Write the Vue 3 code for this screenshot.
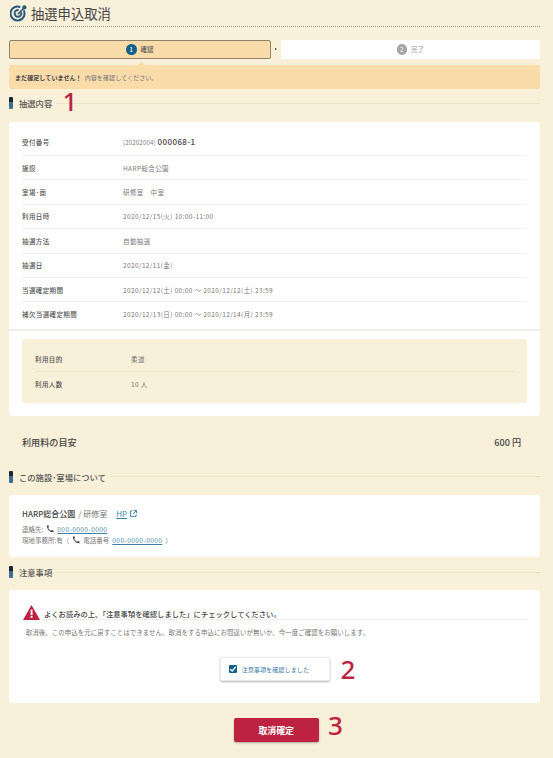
<script setup>
const rows = [
  { label: '施設', value: 'HARP総合公園' },
  { label: '室場･面', value: '研修室　中室' },
  { label: '利用日時', value: '2020/12/15(火) 10:00-11:00' },
  { label: '抽選方法', value: '自動抽選' },
  { label: '抽選日', value: '2020/12/11(金)' },
  { label: '当選確定期間', value: '2020/12/12(土) 00:00 ～ 2020/12/12(土) 23:59' },
  { label: '補欠当選確定期間', value: '2020/12/13(日) 00:00 ～ 2020/12/14(月) 23:59' },
]
</script>

<template>
  <div class="page">
    <header class="title">
      <svg class="target" width="17" height="17" viewBox="0 0 17 17" fill="none" stroke="#28577c" aria-hidden="true">
        <path d="M13.8 5.4A7 7 0 1 1 10.4 2.1" stroke-width="2" />
        <path d="M11.2 7.2A3.4 3.4 0 1 1 8.6 5" stroke-width="1.9" />
        <path d="M7.8 9.2L14 3" stroke-width="1.6" />
        <circle cx="14.4" cy="2.4" r="2.1" fill="#28577c" stroke="none" />
      </svg>
      <h1>抽選申込取消</h1>
    </header>

    <div class="steps">
      <div class="step active"><span class="num">1</span>確認</div>
      <span class="arrow"></span>
      <div class="step"><span class="num">2</span>完了</div>
    </div>

    <div class="alert"><b>まだ確定していません！</b>内容を確認してください。</div>

    <div class="section first">
      <span class="bar"></span><h2>抽選内容</h2><span class="rule"></span>
      <span class="mark mark1">1</span>
    </div>

    <section class="card detail">
      <dl class="table main">
        <div class="row">
          <dt>受付番号</dt>
          <dd class="receipt"><small>[20202004]</small> <strong>000068-1</strong></dd>
        </div>
        <div v-for="r in rows" :key="r.label" class="row">
          <dt>{{ r.label }}</dt>
          <dd>{{ r.value }}</dd>
        </div>
      </dl>
      <div class="sub-wrap">
        <dl class="table sub">
          <div class="row"><dt>利用目的</dt><dd>柔道</dd></div>
          <div class="row"><dt>利用人数</dt><dd>10 人</dd></div>
        </dl>
      </div>
    </section>

    <div class="fee"><span>利用料の目安</span><span>600 円</span></div>

    <div class="section">
      <span class="bar"></span><h2>この施設･室場について</h2><span class="rule"></span>
    </div>

    <section class="card facility">
      <p class="fname">
        <b>HARP総合公園</b><span class="room">/ 研修室</span>
        <a class="hp">HP</a>
        <svg width="7" height="7" viewBox="0 0 8 8" fill="none" stroke="#3f7fa6" stroke-width="1.1" aria-hidden="true">
          <path d="M3 1H.7v6.3H7V5M4.4.6h3v3M7.2.8L3.4 4.6" />
        </svg>
      </p>
      <p class="contact">連絡先:<svg class="tel" width="8" height="8" viewBox="0 0 8 8" aria-hidden="true"><path d="M1 .5L2.4 .2 3 2 2.2 2.8C2.7 4 3.8 5.2 5 5.8L5.9 5 7.7 5.7 7.4 7.2C4 7.6.5 4 1 .5Z" fill="#444"/></svg><a>000-0000-0000</a></p>
      <p class="contact">現地事務所:有（<svg class="tel" width="8" height="8" viewBox="0 0 8 8" aria-hidden="true"><path d="M1 .5L2.4 .2 3 2 2.2 2.8C2.7 4 3.8 5.2 5 5.8L5.9 5 7.7 5.7 7.4 7.2C4 7.6.5 4 1 .5Z" fill="#444"/></svg><span>電話番号</span><a>000-0000-0000</a><span>）</span></p>
    </section>

    <div class="section">
      <span class="bar"></span><h2>注意事項</h2><span class="rule"></span>
    </div>

    <section class="card notice">
      <div class="warn">
        <svg width="17" height="15" viewBox="0 0 17 15" aria-hidden="true">
          <path d="M8.5 0L17 15H0Z" fill="#bd2340" />
          <rect x="7.6" y="4.6" width="1.9" height="5.6" fill="#fff" />
          <rect x="7.6" y="11" width="1.9" height="1.9" fill="#fff" />
        </svg>
        <p>よくお読みの上､「注意事項を確認しました」にチェックしてください。</p>
      </div>
      <p class="desc">取消後、この申込を元に戻すことはできません。取消をする申込にお間違いが無いか、今一度ご確認をお願いします。</p>
      <div class="check-line">
        <label class="check">
          <span class="box">
            <svg width="8" height="8" viewBox="0 0 8 8" fill="none" stroke="#fff" stroke-width="1.3" aria-hidden="true"><path d="M1.2 4.2L3.2 6 6.8 1.8" /></svg>
          </span>
          注意事項を確認しました
          <span class="mark mark2">2</span>
        </label>
      </div>
    </section>

    <div class="actions">
      <button class="confirm" type="button">
        取消確定
        <span class="mark mark3">3</span>
      </button>
    </div>
  </div>
</template>

<style>
html, body { margin: 0; background: #f8f0d9; }
</style>

<style scoped>
* { box-sizing: border-box; }
.page {
  width: 553px;
  height: 758px;
  overflow: hidden;
  padding: 0 13px 0 9px;
  background: #f8f0d9;
  color: #555;
  font-family: "Noto Sans CJK JP", "Noto Sans", sans-serif;
  font-size: 6.5px;
}
p, h1, h2, dl, dd { margin: 0; }

.title {
  display: flex;
  align-items: center;
  gap: 4px;
  height: 27px;
  padding: 1px 0 0 1px;
  border-bottom: 1px dotted #999;
}
.title h1 {
  font-size: 13.3px;
  font-weight: 400;
  color: #444;
  line-height: 1;
}
.steps {
  display: flex;
  align-items: center;
  margin-top: 13px;
}
.step {
  flex: 1;
  height: 18.5px;
  display: flex;
  align-items: center;
  justify-content: center;
  gap: 4px;
  background: #fff;
  border-radius: 2px;
  color: #999;
  font-size: 6.5px;
}
.step.active {
  background: #fadcaa;
  border: 1px solid #8d8468;
  color: #555;
  font-weight: 500;
}
.num {
  width: 10.5px;
  height: 10.5px;
  border-radius: 50%;
  background: #a5a5a5;
  color: #fff;
  display: flex;
  align-items: center;
  justify-content: center;
  font-size: 6px;
}
.active .num { background: #145f8c; }
.arrow {
  width: 10px;
  display: flex;
  justify-content: center;
}
.arrow::before {
  content: "";
  border-left: 2px solid #333;
  border-top: 1.5px solid transparent;
  border-bottom: 1.5px solid transparent;
}
.alert {
  position: relative;
  margin-top: 6.5px;
  height: 24px;
  padding: 0 6px;
  display: flex;
  align-items: center;
  gap: 3px;
  background: #fadcaa;
  border-radius: 2px;
  color: #777;
  font-size: 6.1px;
  white-space: pre;
}
.alert b { color: #444; font-weight: 700; }
.alert::before {
  content: "";
  position: absolute;
  top: -3px;
  left: 128px;
  border-left: 4px solid transparent;
  border-right: 4px solid transparent;
  border-bottom: 3px solid #fadcaa;
}

.section {
  position: relative;
  display: flex;
  align-items: center;
  height: 13px;
  margin-top: 8.5px;
}
.section.first { margin-top: 7.5px; }
.bar {
  width: 4px;
  height: 12px;
  background: linear-gradient(#1a2530 0 40%, #3e6d92 40%);
  border-radius: 1px;
}
.section h2 {
  margin-left: 6px;
  font-size: 8.3px;
  font-weight: 500;
  color: #555;
  white-space: nowrap;
}
.rule {
  flex: 1;
  height: 1px;
  margin-left: 4px;
  background: #ece3c8;
}
.mark {
  position: absolute;
  font-family: "Noto Sans", sans-serif;
  font-size: 26px;
  line-height: 1;
  font-weight: 500;
  color: #bd2340;
}
.mark1 { left: 53.5px; top: -9px; }
.mark2 { left: 120px; top: -2.5px; }
.mark3 { left: 94px; top: -6.5px; }

.card {
  background: #fff;
  border-radius: 3px;
}
.detail {
  margin-top: 12.5px;
  height: 294px;
}
.table .row {
  display: flex;
  align-items: center;
  border-top: 1px solid #f0f0ee;
  letter-spacing: .38px;
}
.table .row:first-child { border-top: 0; }
.table dt {
  font-weight: 500;
  color: #555;
}
.table dd { color: #777; }
.main {
  padding: 9px 13px 0;
  height: 209px;
  border-bottom: 2px solid #eeeeea;
}
.main .row { height: 24.4px; }
.main .row:first-child { height: 24px; padding-bottom: 3px; }
.main dt { width: 101px; }
.receipt strong {
  font-size: 8px;
  font-weight: 500;
  color: #444;
  letter-spacing: .4px;
}
.receipt small {
  font-size: 6px;
  letter-spacing: .2px;
}
.sub-wrap { padding: 8px 13px 0; }
.sub {
  height: 64px;
  padding: 8px 13px;
  background: #f8f0d9;
  border-radius: 3px;
}
.sub .row { height: 24px; border-top-color: #efe6cc; }
.sub dt { width: 96px; }
.fee {
  display: flex;
  justify-content: space-between;
  padding: 0 19px 0 13px;
  margin: 18px 0 20px;
  height: 16px;
  align-items: center;
  font-size: 9.1px;
  font-weight: 500;
  color: #444;
}

.facility {
  margin-top: 12px;
  height: 62px;
  padding: 11px 13px 0;
}
.fname {
  display: flex;
  align-items: center;
  height: 14px;
  font-size: 8px;
  color: #777;
  white-space: pre;
  margin-bottom: 3px;
}
.fname b { font-weight: 500; color: #444; }
.room { margin-left: 3px; }
.hp {
  margin: 0 3px 0 9px;
  color: #3f7fa6;
  text-decoration: underline;
}
.contact {
  display: flex;
  align-items: center;
  height: 11px;
  gap: 3px;
  color: #777;
  white-space: pre;
}
.contact a, .hp { text-underline-offset: 1px; }
.contact a {
  color: #3f7fa6;
  text-decoration: underline;
  letter-spacing: .45px;
}
.notice {
  margin-top: 11.5px;
  height: 113px;
  padding: 15px 13px 0;
}
.warn {
  display: flex;
  align-items: center;
  gap: 4px;
  margin-left: 1px;
}
.warn p {
  flex: 1;
  height: 15px;
  padding-top: 3px;
  line-height: 12px;
  font-size: 7.3px;
  font-weight: 500;
  color: #444;
  white-space: nowrap;
  border-bottom: 1px dotted #ddd;
}
.desc {
  margin: 7px 0 0 3.7px;
  height: 10px;
  line-height: 10px;
  color: #777;
}
.check-line {
  display: flex;
  justify-content: center;
  margin-top: 20px;
}
.check {
  position: relative;
  width: 110px;
  height: 24px;
  padding-left: 8px;
  display: flex;
  align-items: center;
  gap: 5px;
  background: #fff;
  border: 1px solid #eaeaea;
  border-radius: 2px;
  box-shadow: 0 1px 2px rgba(0, 0, 0, .3);
  color: #3f7fa6;
  font-size: 6.15px;
}
.box {
  width: 8px;
  height: 8px;
  background: #145f8c;
  border-radius: 1px;
  display: flex;
}
.actions {
  display: flex;
  justify-content: center;
  margin-top: 15px;
  padding-left: 3.5px;
}
.confirm {
  position: relative;
  width: 84.5px;
  height: 24px;
  border: 0;
  border-radius: 2px;
  background: #bd2340;
  box-shadow: 0 1px 2px rgba(0, 0, 0, .3);
  color: #fff;
  font-family: inherit;
  font-size: 8.9px;
  font-weight: 700;
}
</style>
